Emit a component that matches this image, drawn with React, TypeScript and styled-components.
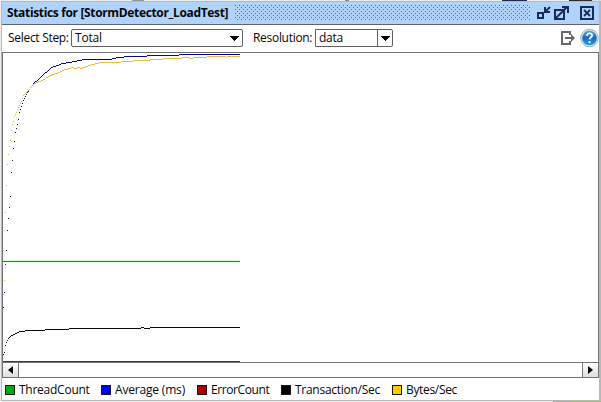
import React from 'react';
import styled, { createGlobalStyle } from 'styled-components';

const GlobalStyle = createGlobalStyle`
  * { box-sizing: border-box; }
  body { margin: 0; background: #fff; overflow: hidden; }
`;

const Page = styled.div`
  width: 601px;
  height: 402px;
  padding: 1px 0 1px 1px;
  background: linear-gradient(90deg, #eee 0 132px, #999 132px 144px, #eee 144px 345px, #889 345px 349px, #eee 349px 502px, #23284a 502px 527px, #eee 527px 569px, #322820 569px 592px, #ddd 592px) top / 100% 1px no-repeat,
    linear-gradient(90deg, #eee 0 553px, #aaa 553px 570px, #a8b877 570px) bottom / 100% 1px no-repeat, #eee;
  font-family: 'Open Sans', 'Noto Sans', sans-serif;
  color: #080808;
`;

const Frame = styled.section`
  width: 600px;
  height: 400px;
  display: flex;
  flex-direction: column;
  background: #fff;
  border: 1px solid #b8b8b8;
  border-right-width: 2px;
`;

const TitleBar = styled.header`
  height: 23px;
  flex: none;
  display: flex;
  align-items: center;
  padding: 0 4px 0 5px;
  background: #afd3fa;
  border-bottom: 1px solid #606469;
`;

const Label = styled.span<{ $width: number; $spacing?: number; $bold?: boolean }>`
  flex: none;
  width: ${p => p.$width}px;
  font-size: 12px;
  line-height: 16px;
  font-weight: ${p => (p.$bold ? 700 : 400)};
  letter-spacing: ${p => p.$spacing ?? 0}px;
  white-space: nowrap;
`;

const Grip = styled.div`
  width: 296px;
  height: 16px;
  margin-left: 5px;
  background-size: 4px 4px;
  background-image: conic-gradient(from 270deg at 1px 1px, #46688f 90deg, transparent 0),
    conic-gradient(from 270deg at 1px 1px, #46688f 90deg, transparent 0);
  background-position: 0 0, 2px 2px;
`;

const WindowIcons = styled.div`
  display: flex;
  align-items: center;
  margin-left: auto;
  svg { display: block; }
`;

const Toolbar = styled.div`
  height: 27px;
  flex: none;
  display: flex;
  align-items: center;
  padding: 0 0 1px 6px;
`;

const Select = styled.div<{ $width: number; $gap: number; $split?: boolean }>`
  width: ${p => p.$width}px;
  height: 18px;
  margin-right: ${p => p.$gap}px;
  display: flex;
  align-items: center;
  justify-content: space-between;
  padding-left: 3px;
  border: 1px solid #606060;
  border-radius: ${p => (p.$split ? '0 2px 2px 0' : '2px')};
`;

const Arrow = styled.div<{ $split?: boolean }>`
  width: 15px;
  height: 16px;
  display: grid;
  place-items: center;
  border-left: ${p => (p.$split ? '1px solid #606060' : '0')};
  svg { display: block; }
`;

const ChartArea = styled.div`
  height: 311px;
  flex: none;
  border: 1px solid #737373;
  overflow: hidden;
  svg { display: block; }
`;

const ScrollBar = styled.div`
  height: 15px;
  flex: none;
  display: flex;
  justify-content: space-between;
  border: 1px solid #737373;
  border-top: 0;
`;

const ScrollButton = styled.div<{ $right?: boolean }>`
  width: 16px;
  display: grid;
  place-items: center;
  background: linear-gradient(#fff, #ddd);
  border: 0 solid #777;
  border-width: ${p => (p.$right ? '0 0 0 1px' : '0 1px 0 0')};
  svg { display: block; }
`;

const Legend = styled.footer`
  flex: 1;
  display: flex;
  align-items: center;
  padding: 1px 0 0 3px;
`;

const Swatch = styled.i<{ $color: string }>`
  flex: none;
  width: 10px;
  height: 10px;
  margin-right: 4px;
  background: ${p => p.$color};
  border: 1px solid #181818;
`;

type Point = [number, number];

const average: Point[] = [
  [3, 307], [4, 292], [5, 264], [6, 250], [7, 230], [8, 218], [9, 207], [10, 196], [11, 172], [12, 160],
  [13, 148], [14, 141], [15, 132], [16, 128], [18, 119], [19, 112], [20, 109], [21, 106], [22, 103],
  [23, 100], [24, 98], [25, 96], [26, 94], [30, 87], [34, 82], [38, 79], [43, 74], [48, 70], [51, 67],
  [54, 66], [62, 63], [69, 62], [74, 61], [84, 59], [111, 59], [112, 58], [119, 57], [128, 56],
  [146, 56], [147, 55], [178, 55], [179, 54], [240, 54],
];
const bytes: Point[] = [
  [3, 294], [4, 280], [5, 212], [6, 185], [7, 164], [8, 154], [9, 146], [10, 140], [11, 130], [12, 124],
  [13, 121], [14, 116], [15, 114], [17, 109], [19, 105], [21, 101], [23, 95], [25, 93], [28, 90],
  [31, 86], [34, 83], [38, 81], [42, 80], [45, 78], [50, 75], [56, 73], [62, 70], [72, 67],
  [75, 68], [78, 67], [81, 68], [92, 64], [101, 62], [117, 62], [124, 61], [141, 60], [146, 60],
  [152, 59], [173, 58], [189, 57], [190, 58], [195, 57], [206, 57], [207, 56], [225, 56], [226, 57], [227, 56], [240, 56],
];
const transactions: Point[] = [
  [3, 354], [4, 352], [5, 345], [6, 342], [7, 340], [8, 338], [11, 335], [15, 333], [20, 331],
  [29, 330], [44, 330], [45, 329], [68, 329], [69, 328], [140, 328], [141, 327], [143, 327],
  [144, 328], [149, 328], [150, 327], [240, 327],
];

// One pixel is plotted for each sample column.
const plot = (points: Point[]) => {
  let d = '';
  for (let i = 0; i < points.length - 1; i++) {
    const [x0, y0] = points[i];
    const [x1, y1] = points[i + 1];
    for (let x = x0; x < x1; x++) {
      const y = Math.round(y0 + ((y1 - y0) * (x - x0)) / (x1 - x0));
      d += `M${x} ${y}h1v1h-1z`;
    }
  }
  return d;
};

const legend = [
  { name: 'ThreadCount', color: '#00ab08', width: 82, spacing: -0.25 },
  { name: 'Average (ms)', color: '#0000f5', width: 82, spacing: -0.18 },
  { name: 'ErrorCount', color: '#aa0000', width: 70, spacing: -0.4 },
  { name: 'Transaction/Sec', color: '#000', width: 97, spacing: -0.27 },
  { name: 'Bytes/Sec', color: '#ffc800', width: 60, spacing: -0.33 },
];

const DownArrow = () => (
  <svg width="9" height="5" shapeRendering="crispEdges"><path d="M0 0h9v1h-1v1h-1v1h-1v1h-1v1h-1v-1h-1v-1h-1v-1h-1v-1h-1z" /></svg>
);

const WindowControls = () => (
  <svg width="59" height="16" fill="none" stroke="#182b59" strokeWidth="2" shapeRendering="crispEdges">
    <path d="M2 8h5v5H2zM9 2v5h5" />
    <path d="M19 5h9v9h-9zM26 2h6v6" />
    <path d="M9 7l5-5M20 13L31 2" shapeRendering="auto" strokeWidth="1.8" />
    <path d="M45 2h12v12H45z" />
    <path d="M48 5l6 6M54 5l-6 6" shapeRendering="auto" strokeWidth="1.8" />
  </svg>
);

const ToolIcons = () => (
  <svg width="39" height="20">
    <path d="M10 7V4H2v12h8v-3M5 10h8" fill="none" stroke="#686868" strokeWidth="2" />
    <path d="M11 6l4 4-4 4z" fill="#686868" />
    <defs>
      <linearGradient id="help" x1="0" y1="0" x2="0" y2="1">
        <stop offset="0" stopColor="#68a8df" /><stop offset=".5" stopColor="#1769b5" /><stop offset="1" stopColor="#30a4eb" />
      </linearGradient>
    </defs>
    <circle cx="29.5" cy="10" r="8.8" fill="#e7edf2" stroke="#a3afb9" />
    <circle cx="29.5" cy="10" r="7.4" fill="url(#help)" />
    <path d="M27 8c0-4 6-3 5 0-.4 1.3-2.5 1.4-2.5 3.5M29.5 13v2" fill="none" stroke="#fff" strokeWidth="1.8" />
  </svg>
);

export default function App() {
  return (
    <Page>
      <GlobalStyle />
      <Frame>
        <TitleBar>
          <Label $width={223} $spacing={-0.35} $bold>Statistics for [StormDetector_LoadTest]</Label>
          <Grip />
          <WindowIcons><WindowControls /></WindowIcons>
        </TitleBar>
        <Toolbar>
          <Label $width={63} $spacing={-0.3}>Select Step:</Label>
          <Select $width={172} $gap={10}><Label $width={28} $spacing={-0.2}>Total</Label><Arrow><DownArrow /></Arrow></Select>
          <Label $width={62} $spacing={-0.3}>Resolution:</Label>
          <Select $width={78} $gap={0} $split><Label $width={25} $spacing={-0.3}>data</Label><Arrow $split><DownArrow /></Arrow></Select>
          <WindowIcons><ToolIcons /></WindowIcons>
        </Toolbar>
        <ChartArea>
          <svg width="595" height="309" viewBox="3 53 595 309" shapeRendering="crispEdges">
            <path d={plot(average)} fill="#080884" />
            <path d={plot(bytes)} fill="#e2bc45" />
            <path d={plot(transactions)} fill="#080808" />
            <path d="M3 260h237v3H3z" fill="#e0ffe0" />
            <path d="M3 261h237v1H3z" fill="#228a24" />
            <path d="M3 361h237v1H3z" fill="#a40c18" />
          </svg>
        </ChartArea>
        <ScrollBar>
          <ScrollButton><svg width="5" height="8"><path d="M5 0v8L0 4z" /></svg></ScrollButton>
          <ScrollButton $right><svg width="5" height="8"><path d="M0 0l5 4-5 4z" /></svg></ScrollButton>
        </ScrollBar>
        <Legend>
          {legend.map(item => (
            <React.Fragment key={item.name}>
              <Swatch $color={item.color} />
              <Label $width={item.width} $spacing={item.spacing}>{item.name}</Label>
            </React.Fragment>
          ))}
        </Legend>
      </Frame>
    </Page>
  );
}
